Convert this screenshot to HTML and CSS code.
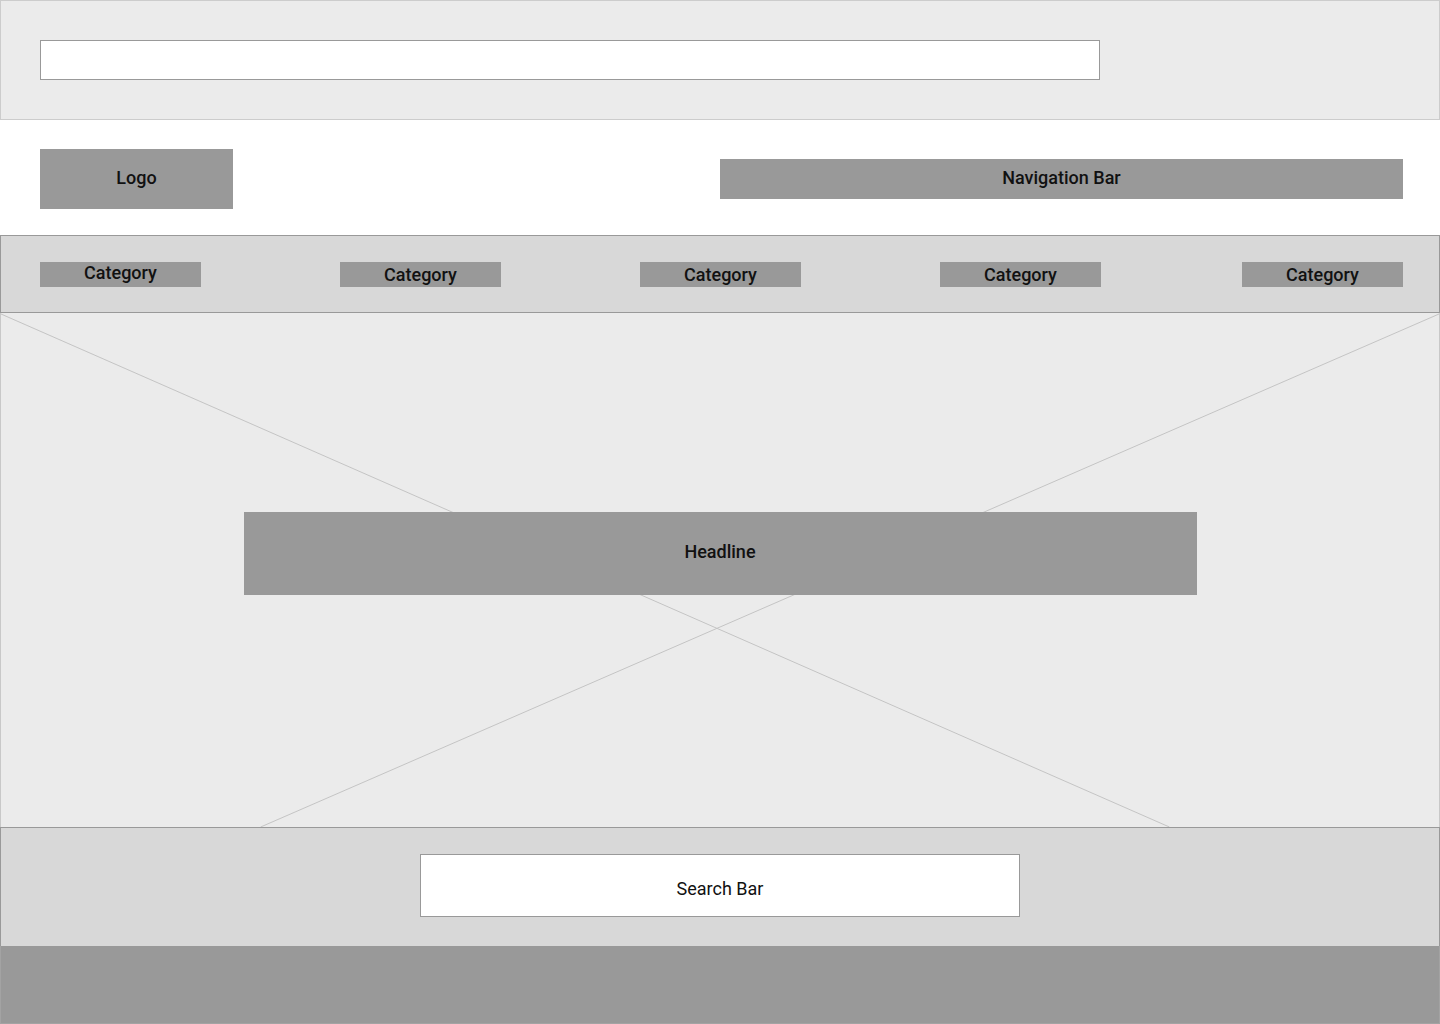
FILE: index.html
```html
<!DOCTYPE html>
<html lang="en">
<head>
    <meta charset="UTF-8">
    <meta name="viewport" content="width=device-width, initial-scale=1.0">
    <title>Homepage Wireframe</title>
    <link rel="stylesheet" href="styles.css">
</head>
<body>
    <header class="top-bar">
        <div class="url-field"></div>
    </header>

    <div class="brand-row">
        <div class="logo">Logo</div>
        <nav class="nav-bar">Navigation Bar</nav>
    </div>

    <div class="category-bar">
        <div class="category category-first">Category</div>
        <div class="category">Category</div>
        <div class="category">Category</div>
        <div class="category">Category</div>
        <div class="category category-last">Category</div>
    </div>

    <section class="hero">
        <svg class="hero-cross" viewBox="0 0 1440 514" preserveAspectRatio="none">
            <line x1="0" y1="1" x2="1170" y2="514" />
            <line x1="1440" y1="1" x2="260" y2="514" />
        </svg>
        <div class="headline">Headline</div>
    </section>

    <section class="search-section">
        <div class="search-bar">Search Bar</div>
    </section>

    <footer class="footer"></footer>
</body>
</html>
```

FILE: styles.css
```css
* {
    box-sizing: border-box;
}

body {
    margin: 0;
    width: 1440px;
    font-family: Roboto, "Liberation Sans", sans-serif;
    font-size: 18px;
    font-weight: 500;
    color: #111;
    background: #fff;
}

.top-bar {
    height: 120px;
    padding: 39px 39px;
    background-color: #ebebeb;
    border: 1px solid #cccccc;
}

.url-field {
    width: 1060px;
    height: 40px;
    background-color: #fff;
    border: 1px solid #999;
}

.brand-row {
    height: 115px;
    padding: 29px 37px 0 40px;
    display: flex;
    justify-content: space-between;
    align-items: flex-start;
}

.logo {
    width: 193px;
    height: 60px;
    padding-bottom: 3px;
    background-color: #999;
    display: flex;
    justify-content: center;
    align-items: center;
}

.nav-bar {
    width: 683px;
    height: 40px;
    margin-top: 10px;
    padding-bottom: 3px;
    background-color: #999;
    display: flex;
    justify-content: center;
    align-items: center;
}

.category-bar {
    height: 78px;
    padding: 26px 36px 0 39px;
    background-color: #d8d8d8;
    border: 1px solid #999;
    display: flex;
    gap: 139px;
    align-items: flex-start;
}

.category {
    width: 161px;
    height: 25px;
    background-color: #999;
    display: flex;
    justify-content: center;
    align-items: center;
    line-height: 1;
}

.category-first {
    align-items: flex-start;
    padding-top: 2px;
}

.category-last {
    margin-left: auto;
}

.hero {
    position: relative;
    height: 514px;
    padding-top: 199px;
    background-color: #ebebeb;
    border-left: 1px solid #c8c8c8;
    border-right: 1px solid #c8c8c8;
}

.hero-cross {
    position: absolute;
    top: 0;
    left: 0;
    width: 100%;
    height: 100%;
}

.hero-cross line {
    stroke: #c4c4c4;
    stroke-width: 1;
}

.headline {
    position: relative;
    width: 953px;
    height: 83px;
    margin: 0 auto;
    padding-bottom: 4px;
    background-color: #999;
    display: flex;
    justify-content: center;
    align-items: center;
}

.search-section {
    height: 119px;
    padding-top: 26px;
    background-color: #d8d8d8;
    border: 1px solid #999;
    border-bottom: none;
}

.search-bar {
    width: 600px;
    height: 63px;
    margin-left: 419px;
    padding-top: 6px;
    background-color: #fff;
    border: 1px solid #999;
    display: flex;
    justify-content: center;
    align-items: center;
    font-weight: 400;
}

.footer {
    height: 78px;
    background-color: #999;
    border: 1px solid #a3a3a3;
    border-top: none;
}
```
